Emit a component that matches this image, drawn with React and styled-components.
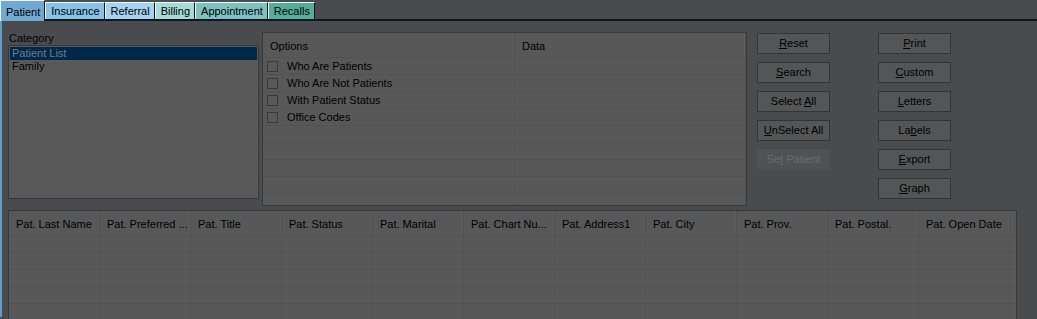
import styled, { createGlobalStyle } from "styled-components";

const Global = createGlobalStyle`
  html, body {
    margin: 0;
    padding: 0;
    background: #4a4b4f;
  }
  * { box-sizing: border-box; }
`;

const Screen = styled.div`
  width: 1037px;
  height: 319px;
  overflow: hidden;
  background: #4a4b4f;
  font-family: "Liberation Sans", Arial, sans-serif;
  font-size: 11px;
  color: #000;
`;

const TabBar = styled.div`
  display: flex;
  align-items: flex-end;
  height: 21px;
  border-bottom: 2px solid #0b1822;
`;

const Tab = styled.div`
  height: ${(p) => (p.$active ? "21px" : "17px")};
  margin-bottom: ${(p) => (p.$active ? "-2px" : "0")};
  padding: ${(p) => (p.$active ? "4px 4px 0 5px" : "1px 4px 0 5px")};
  background: ${(p) => p.$color};
  border-top: 1px solid #f4f8fb;
  border-left: 1px solid #f4f8fb;
  border-right: 1px solid #101418;
  line-height: 14px;
  font-size: 11px;
  white-space: nowrap;
  position: relative;
  z-index: ${(p) => (p.$active ? 2 : 1)};
`;

const Body = styled.div`
  border-left: 2px solid #5e9ccc;
  height: 296px;
  padding: 11px 0 0 6px;
`;

const TopRow = styled.div`
  display: flex;
  align-items: flex-start;
`;

const CategoryBox = styled.div`
  width: 251px;
  display: flex;
  flex-direction: column;
  margin-right: 3px;
`;

const Label = styled.div`
  height: 13px;
  line-height: 13px;
  padding-left: 1px;
`;

const ListBox = styled.div`
  height: 154px;
  border: 1px solid #37383a;
  background: #595959;
  padding: 1px;
`;

const ListItem = styled.div`
  height: 13px;
  line-height: 13px;
  padding-left: 2px;
  background: ${(p) => (p.$selected ? "#00284a" : "transparent")};
  color: ${(p) => (p.$selected ? "#6d7c8c" : "#000")};
`;

const OptionsGrid = styled.div`
  width: 485px;
  height: 174px;
  border: 1px solid #37383a;
  background: #585858;
  overflow: hidden;
`;

const GridRow = styled.div`
  display: grid;
  grid-template-columns: ${(p) => p.$cols};
  height: ${(p) => (p.$header ? "25px" : "17px")};
  border-bottom: 1px solid #525252;
`;

const HeadCell = styled.div`
  padding: 6px 0 0 7px;
  line-height: 14px;
  border-right: 1px solid #4f4f4f;
  box-shadow: inset -1px 0 0 #5e5e5e;
  white-space: nowrap;
  overflow: hidden;
`;

const Cell = styled.div`
  display: flex;
  align-items: center;
  border-right: 1px solid #525252;
  white-space: nowrap;
  overflow: hidden;
`;

const Check = styled.span`
  width: 11px;
  height: 11px;
  border: 1px solid #38393b;
  margin: 0 9px 0 4px;
  flex: none;
`;

const ButtonCols = styled.div`
  display: flex;
  gap: 48px;
  margin-left: 10px;
  padding-top: 1px;
`;

const ButtonCol = styled.div`
  display: flex;
  flex-direction: column;
  gap: 8px;
`;

const Button = styled.div`
  width: 73px;
  height: 21px;
  border: 1px solid ${(p) => (p.$disabled ? "#4f5052" : "#333436")};
  background: ${(p) => (p.$disabled ? "#505153" : "#545557")};
  color: ${(p) => (p.$disabled ? "#6b6c6e" : "#000")};
  display: flex;
  align-items: center;
  justify-content: center;
  line-height: 13px;
  white-space: pre;
`;

const DataTable = styled.div`
  margin-top: 4px;
  width: 1009px;
  height: 120px;
  border: 1px solid #37383a;
  background: #585858;
  overflow: hidden;
`;

const optionRows = ["Who Are Patients", "Who Are Not Patients", "With Patient Status", "Office Codes"];

const leftButtons = [
  ["", "R", "eset"],
  ["", "S", "earch"],
  ["Select ", "A", "ll"],
  ["", "U", "nSelect All"],
];

const rightButtons = [
  ["", "P", "rint"],
  ["", "C", "ustom"],
  ["", "L", "etters"],
  ["La", "b", "els"],
  ["", "E", "xport"],
  ["", "G", "raph"],
];

const tableCols = [
  "Pat. Last Name",
  "Pat. Preferred ...",
  "Pat. Title",
  "Pat. Status",
  "Pat. Marital",
  "Pat. Chart Nu...",
  "Pat. Address1",
  "Pat. City",
  "Pat. Prov.",
  "Pat. Postal.",
  "Pat. Open Date",
];

const tabs = [
  { name: "Patient", color: "#72a9d2" },
  { name: "Insurance", color: "#87c3e6" },
  { name: "Referral", color: "#a3d3f0" },
  { name: "Billing", color: "#a6dad6" },
  { name: "Appointment", color: "#7dc1c0" },
  { name: "Recalls", color: "#55ae9a" },
];

const optCols = "252px 1fr";
const tabCols = "repeat(11, 91px) 1fr";

const Caption = ({ parts }) => (
  <span>
    {parts[0]}
    <u>{parts[1]}</u>
    {parts[2]}
  </span>
);

export default function App() {
  return (
    <Screen>
      <Global />
      <TabBar>
        {tabs.map((t, i) => (
          <Tab key={t.name} $color={t.color} $active={i === 0}>
            {t.name}
          </Tab>
        ))}
      </TabBar>
      <Body>
        <TopRow>
          <CategoryBox>
            <Label>Category</Label>
            <ListBox>
              <ListItem $selected>Patient List</ListItem>
              <ListItem>Family</ListItem>
            </ListBox>
          </CategoryBox>

          <OptionsGrid>
            <GridRow $header $cols={optCols}>
              <HeadCell>Options</HeadCell>
              <HeadCell>Data</HeadCell>
            </GridRow>
            {Array.from({ length: 9 }).map((_, i) => (
              <GridRow key={i} $cols={optCols}>
                <Cell>
                  {optionRows[i] && (
                    <>
                      <Check />
                      <span>{optionRows[i]}</span>
                    </>
                  )}
                </Cell>
                <Cell />
              </GridRow>
            ))}
          </OptionsGrid>

          <ButtonCols>
            <ButtonCol>
              {leftButtons.map((b, i) => (
                <Button key={i}>
                  <Caption parts={b} />
                </Button>
              ))}
              <Button $disabled>
                <Caption parts={["Se", "t", " Patient"]} />
              </Button>
            </ButtonCol>
            <ButtonCol>
              {rightButtons.map((b, i) => (
                <Button key={i}>
                  <Caption parts={b} />
                </Button>
              ))}
            </ButtonCol>
          </ButtonCols>
        </TopRow>

        <DataTable>
          <GridRow $header $cols={tabCols}>
            {tableCols.map((c) => (
              <HeadCell key={c}>{c}</HeadCell>
            ))}
            <div />
          </GridRow>
          {Array.from({ length: 6 }).map((_, r) => (
            <GridRow key={r} $cols={tabCols}>
              {tableCols.map((c) => (
                <Cell key={c} />
              ))}
              <div />
            </GridRow>
          ))}
        </DataTable>
      </Body>
    </Screen>
  );
}
